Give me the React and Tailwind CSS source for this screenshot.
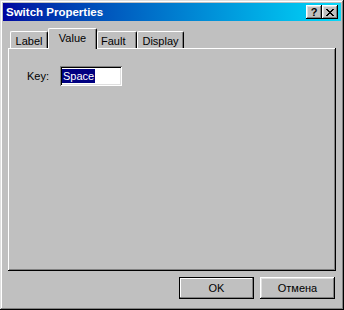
import React from "react";

const raised =
  "shadow-[inset_-1px_-1px_0_#000,inset_1px_1px_0_#fff,inset_-2px_-2px_0_#808080,inset_2px_2px_0_#dfdfdf]";

function CloseGlyph() {
  const rows = [
    "XX....XX",
    ".XX..XX.",
    "..XXXX..",
    "...XX...",
    "..XXXX..",
    ".XX..XX.",
    "XX....XX",
  ];
  const rects = [];
  rows.forEach((r, y) =>
    r.split("").forEach((c, x) => {
      if (c === "X") rects.push(<rect key={`${x}-${y}`} x={x} y={y} width="1" height="1" fill="#000" />);
    })
  );
  return (
    <svg width="8" height="7" viewBox="0 0 8 7" shapeRendering="crispEdges">
      {rects}
    </svg>
  );
}

function Tab({ label, w, selected, left }) {
  return (
    <div
      className={
        "flex bg-[#c0c0c0] border-t border-l border-t-white border-l-white border-r border-r-black rounded-tl-[2px] rounded-tr-[2px] shadow-[inset_-1px_0_0_#808080] pt-[3px] text-[11px] leading-[13px] text-black " +
        (left ? "justify-start pl-[3px] " : "justify-center ") +
        (selected ? "h-[21px] -mb-[1px] relative z-10" : "h-[17px]")
      }
      style={{ width: w }}
    >
      {label}
    </div>
  );
}

export default function App() {
  return (
    <div className="w-[344px] h-[310px] bg-[#c0c0c0] p-[3px] flex flex-col font-['Liberation_Sans',Arial,sans-serif] shadow-[inset_-1px_-1px_0_#000,inset_1px_1px_0_#dfdfdf,inset_-2px_-2px_0_#808080,inset_2px_2px_0_#fff]">
      {/* Title bar */}
      <div className="h-[18px] flex items-center bg-linear-to-r from-[#0000a0] to-[#10d8f8] pr-[3px]">
        <span className="pl-[3px] text-white font-bold text-[11.5px] leading-[13px]">Switch Properties</span>
        <div className="ml-auto flex">
          <div className={"w-[16px] h-[14px] bg-[#c0c0c0] flex items-center justify-center font-bold text-[11px] leading-[11px] text-black " + raised}>
            ?
          </div>
          <div className={"w-[16px] h-[14px] bg-[#c0c0c0] flex items-center justify-center " + raised}>
            <CloseGlyph />
          </div>
        </div>
      </div>

      {/* Body */}
      <div className="flex flex-col px-[5px] pt-[7px]">
        <div className="flex items-end h-[20px] pl-[2px]">
          <Tab label="Label" w={38} />
          <Tab label="Value" w={49} selected />
          <Tab label="Fault" w={40} left />
          <Tab label="Display" w={47} />
        </div>
        <div className="h-[223px] bg-[#c0c0c0] shadow-[inset_-1px_-1px_0_#000,inset_1px_1px_0_#fff,inset_-2px_-2px_0_#808080] pl-[19px] pt-[18px]">
          <div className="flex items-center">
            <span className="text-[11px] leading-[13px] text-black w-[33px]">Key:</span>
            <div className="w-[62px] h-[20px] bg-white flex items-center pl-[2px] shadow-[inset_1px_1px_0_#808080,inset_-1px_-1px_0_#fff,inset_2px_2px_0_#000,inset_-2px_-2px_0_#dfdfdf]">
              <span className="h-[14px] leading-[14px] px-[1px] bg-[#000080] text-white text-[11px]">Space</span>
            </div>
          </div>
        </div>
        <div className="flex justify-end gap-[6px] mt-[6px] pr-[1px]">
          <div className="w-[75px] h-[22px] border border-black bg-[#c0c0c0] flex items-center justify-center text-[11px] leading-[13px] text-black shadow-[inset_-1px_-1px_0_#808080,inset_1px_1px_0_#fff]">
            OK
          </div>
          <div className={"w-[75px] h-[22px] bg-[#c0c0c0] flex items-center justify-center text-[11px] leading-[13px] text-black " + raised}>
            Отмена
          </div>
        </div>
      </div>
    </div>
  );
}
